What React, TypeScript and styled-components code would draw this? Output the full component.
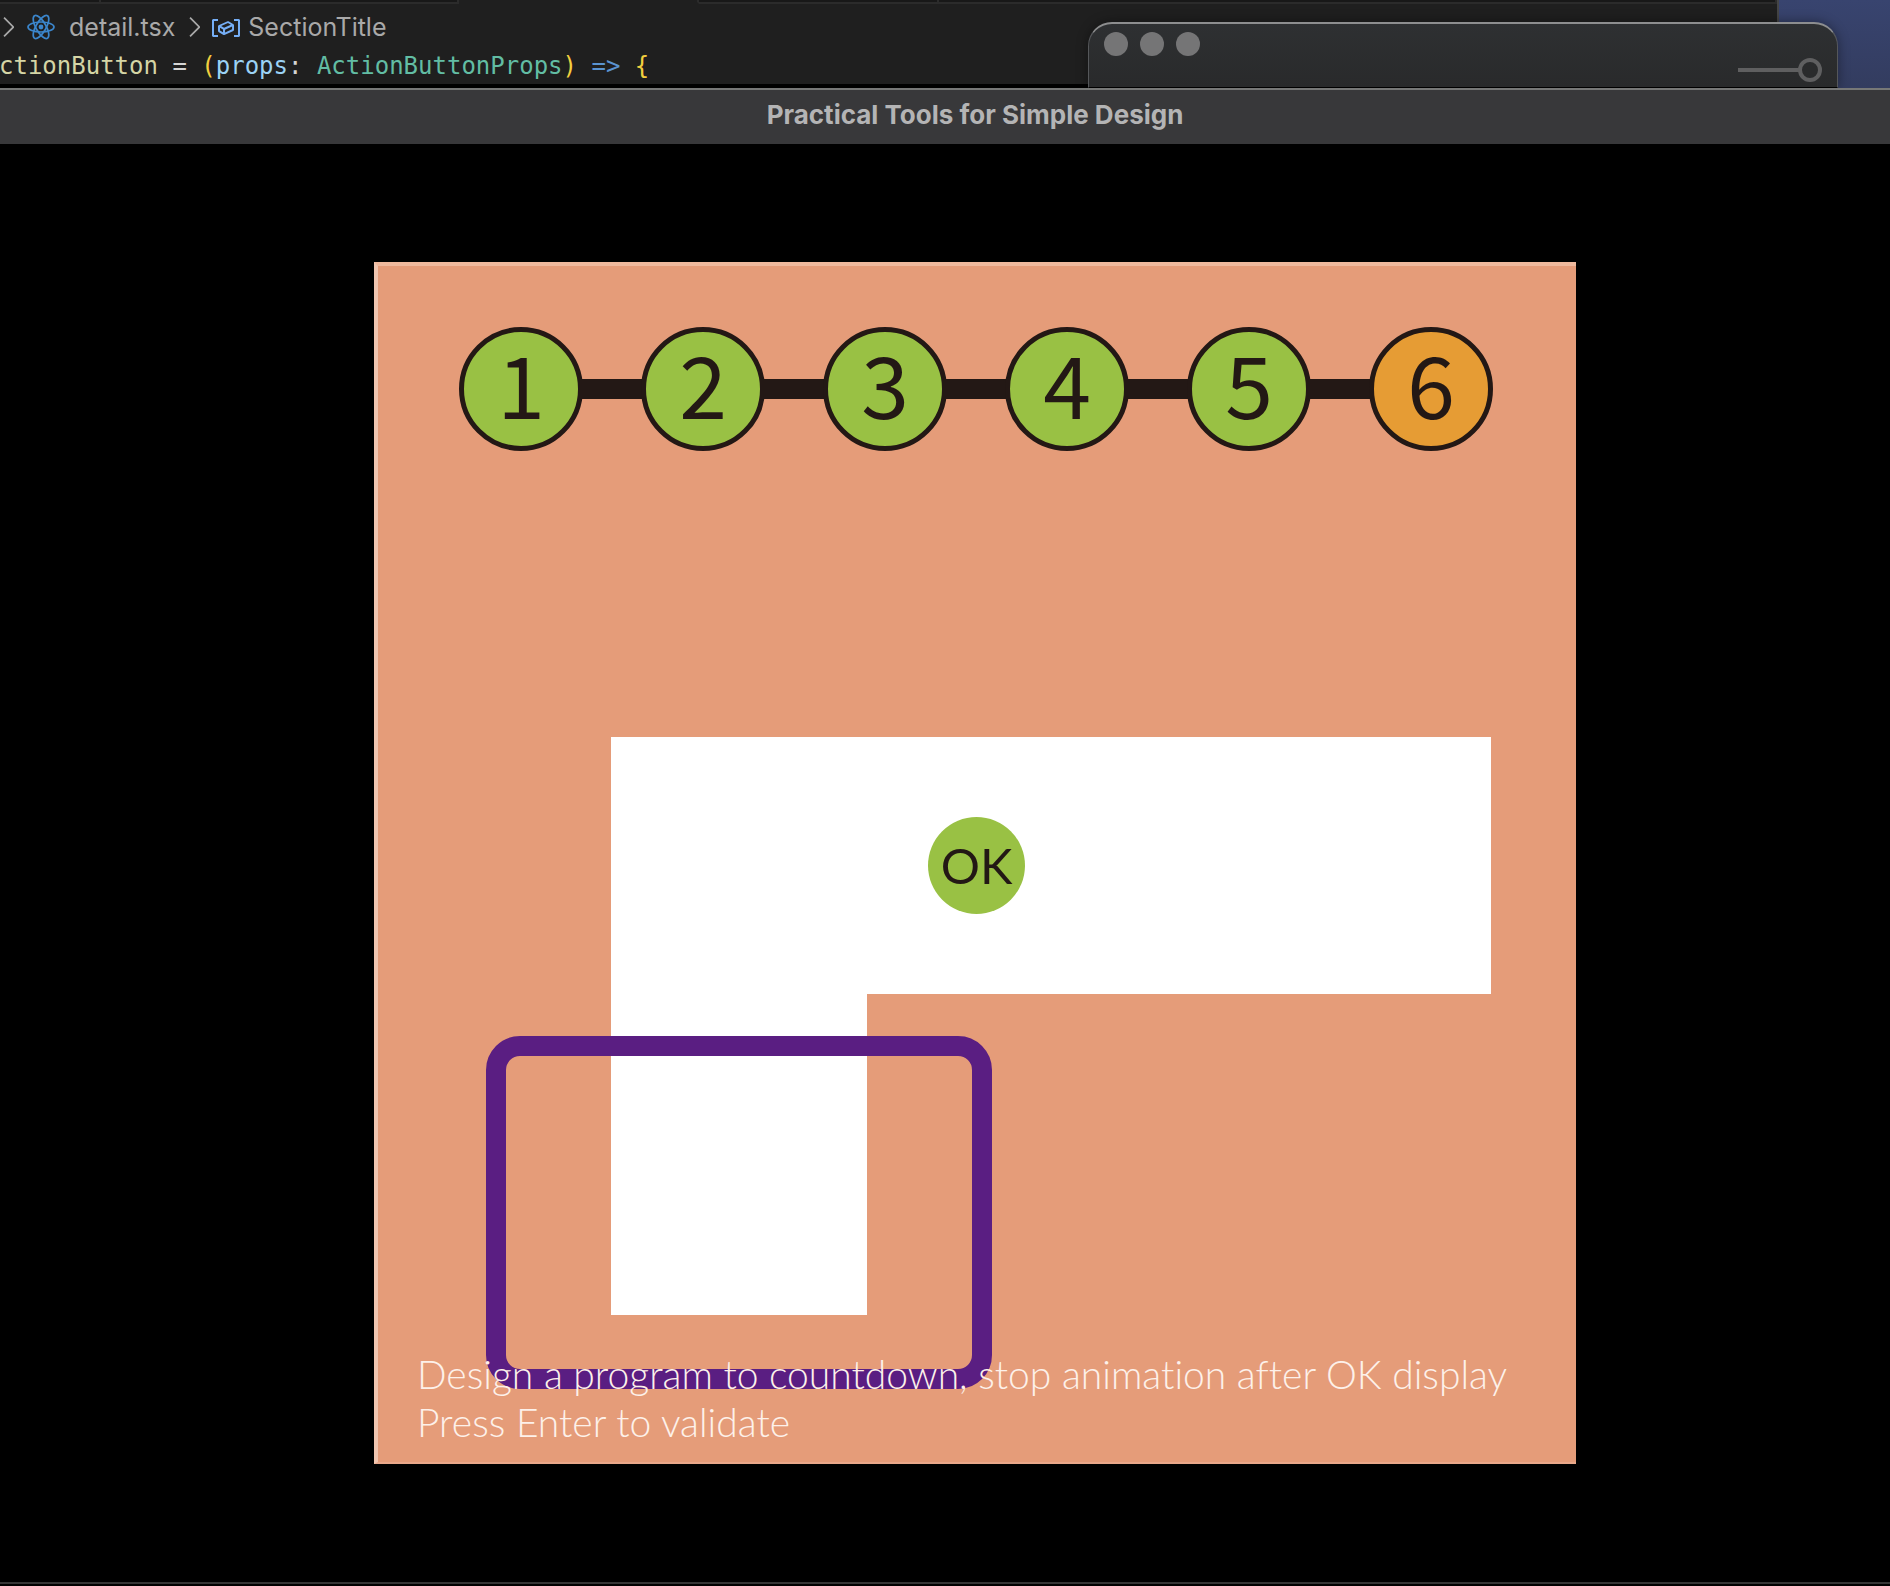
import React from "react";
import styled, { createGlobalStyle } from "styled-components";
import { VscChevronRight, VscSymbolVariable } from "react-icons/vsc";

const ink = "#231815";
const green = "#99c144";
const orange = "#e69c34";
const salmon = "#e59c79";
const purple = "#5a1e82";

const GlobalStyle = createGlobalStyle`
  *, *::before, *::after { box-sizing: border-box; }
  body {
    margin: 0;
    background: #000;
    font-family: Inter, "Liberation Sans", sans-serif;
  }
`;

const Desktop = styled.div`
  position: relative;
  display: flex;
  flex-direction: column;
  min-height: 100vh;
  padding-top: 88px;
  overflow: hidden;
  background: linear-gradient(#38446f, #333c5f 88px, #000 88px);
`;

const EditorWindow = styled.section`
  position: absolute;
  top: 0;
  left: 0;
  right: 111px;
  height: 88px;
  background: #1f1f1f;
  border-right: 2px solid #454545;
  border-bottom: 4px solid #000;
  overflow: hidden;
`;

const TabStrip = styled.div`
  display: flex;
  height: 4px;
`;

const TabEdge = styled.div<{ $width?: number; $active?: boolean }>`
  flex: ${(p) => (p.$width ? `0 0 ${p.$width}px` : "1")};
  background: ${(p) => (p.$active ? "#1f1f1f" : "#181818")};
  border-bottom: 2px solid ${(p) => (p.$active ? "#1f1f1f" : "#2b2b2b")};
  border-right: 2px solid #2b2b2b;
`;

const Breadcrumbs = styled.nav`
  display: flex;
  align-items: center;
  height: 46px;
  margin-left: -8px;
  color: #a9a9a9;
  font-size: 25px;
  line-height: 32px;
`;

const FileCrumb = styled.span`
  display: flex;
  align-items: center;
  gap: 14px;
  padding: 0 3px;
`;

const SymbolCrumb = styled.span`
  display: flex;
  align-items: center;
  gap: 6px;
`;

const CodeLine = styled.pre`
  margin: 0 0 0 -1px;
  font-family: "DejaVu Sans Mono", monospace;
  font-size: 24px;
  line-height: 32px;
  color: #d4d4d4;
`;

const Token = styled.span<{ $color: string }>`
  color: ${(p) => p.$color};
`;

const BackWindow = styled.section`
  position: absolute;
  top: 22px;
  right: 52px;
  width: 750px;
  height: 66px;
  padding: 8px 15px 0;
  background: linear-gradient(#2e3032, #292a2b);
  border: 1px solid #55575a;
  border-top: 2px solid #8d8e8f;
  border-bottom: 1px solid #000;
  border-radius: 24px 24px 0 0;
  box-shadow: 0 0 12px rgba(0, 0, 0, 0.4);
`;

const Lights = styled.div`
  display: flex;
  gap: 12px;
`;

const Light = styled.button`
  width: 24px;
  height: 24px;
  padding: 0;
  border: 0;
  border-radius: 50%;
  background: #757576;
`;

const ZoomSlider = styled.input`
  appearance: none;
  display: block;
  width: 84px;
  height: 24px;
  margin: 2px 0 0 auto;
  background: linear-gradient(#5f5f60, #5f5f60) left center / 62px 4px no-repeat;

  &::-webkit-slider-thumb {
    appearance: none;
    width: 24px;
    height: 24px;
    border: 4px solid #5f5f60;
    border-radius: 50%;
    background: #2a2b2c;
  }
`;

const AppWindow = styled.main`
  position: relative;
  flex: 1;
  display: flex;
  flex-direction: column;
  margin-bottom: 2px;
  background: #000;
  border-bottom: 2px solid #353535;
`;

const TitleBar = styled.header`
  display: flex;
  align-items: center;
  justify-content: center;
  height: 56px;
  padding: 0 0 4px 60px;
  background: #38383a;
  border-top: 2px solid #777877;
`;

const Title = styled.h1`
  margin: 0;
  color: #b4b4b5;
  font-size: 26px;
  line-height: 32px;
  font-weight: 700;
`;

const Stage = styled.div`
  display: flex;
  justify-content: center;
  padding: 118px 0 118px 60px;
`;

const Game = styled.section`
  width: 100%;
  max-width: 1202px;
  padding: 61px 83px 16px 39px;
  background: ${salmon};
  border-top: 4px solid #efb99d;
  border-left: 4px solid #f1c6b0;
  border-bottom: 2px solid #e9a88a;
`;

const Steps = styled.ol`
  display: flex;
  align-items: center;
  margin: 0 0 0 42px;
  padding: 0;
  list-style: none;
`;

const Step = styled.li<{ $current: boolean }>`
  flex: none;
  display: flex;
  align-items: center;
  justify-content: center;
  width: 124px;
  height: 124px;
  padding-bottom: 14px;
  border: 5px solid ${ink};
  border-radius: 50%;
  background: ${(p) => (p.$current ? orange : green)};
  color: ${ink};
  font-family: "Noto Sans CJK JP", sans-serif;
  font-size: 86px;
  line-height: 100px;
`;

const Link = styled.li`
  flex: 1;
  height: 20px;
  margin: 0 -3px;
  background: ${ink};
`;

const Board = styled.div`
  position: relative;
  margin: 286px 2px 35px 194px;
`;

const Arm = styled.div`
  display: flex;
  align-items: center;
  height: 257px;
  padding-left: 317px;
  background: #fff;
`;

const Leg = styled.div`
  width: 256px;
  height: 321px;
  background: #fff;
`;

const OkButton = styled.button`
  width: 97px;
  height: 97px;
  padding: 0 0 2px;
  border: 0;
  border-radius: 50%;
  background: ${green};
  color: ${ink};
  font-family: Lato, sans-serif;
  font-size: 49px;
  line-height: 60px;
`;

const Frame = styled.div`
  position: absolute;
  top: 299px;
  left: -125px;
  width: 506px;
  height: 353px;
  border: 20px solid ${purple};
  border-radius: 34px;
`;

const Hint = styled.p`
  position: relative;
  margin: 0;
  color: #fdf1ea;
  font-family: "Ink Free", Lato, cursive;
  font-size: 39px;
  font-weight: 300;
  font-variant-ligatures: none;
  line-height: 48px;
  white-space: nowrap;
`;

const ReactLogo = () => (
  <svg width="28" height="28" viewBox="-14 -14 28 28" fill="none" stroke="#3b86cc" strokeWidth="1.7" aria-hidden="true">
    <ellipse rx="13" ry="5" />
    <ellipse rx="13" ry="5" transform="rotate(60)" />
    <ellipse rx="13" ry="5" transform="rotate(120)" />
    <circle r="2.4" fill="#3b86cc" stroke="none" />
  </svg>
);

const steps = [1, 2, 3, 4, 5, 6];
const currentStep = 6;

export default function App() {
  return (
    <Desktop>
      <GlobalStyle />
      <EditorWindow>
        <TabStrip>
          <TabEdge $width={101} />
          <TabEdge $width={358} />
          <TabEdge $width={240} $active />
          <TabEdge $width={240} />
          <TabEdge />
        </TabStrip>
        <Breadcrumbs aria-label="Breadcrumb">
          <VscChevronRight size={32} />
          <FileCrumb>
            <ReactLogo />
            <span>detail.tsx</span>
          </FileCrumb>
          <VscChevronRight size={32} />
          <SymbolCrumb>
            <VscSymbolVariable size={32} color="#75aef5" />
            <span>SectionTitle</span>
          </SymbolCrumb>
        </Breadcrumbs>
        <CodeLine>
          <Token $color="#d5d5a5">ctionButton</Token>
          {" = "}
          <Token $color="#f2cf3e">(</Token>
          <Token $color="#9bd2f5">props</Token>
          {": "}
          <Token $color="#62bda4">ActionButtonProps</Token>
          <Token $color="#f2cf3e">)</Token>{" "}
          <Token $color="#5a93d0">=&gt;</Token>{" "}
          <Token $color="#f2cf3e">{"{"}</Token>
        </CodeLine>
      </EditorWindow>

      <BackWindow>
        <Lights>
          <Light aria-label="Close" />
          <Light aria-label="Minimize" />
          <Light aria-label="Zoom" />
        </Lights>
        <ZoomSlider type="range" min={0} max={100} defaultValue={100} aria-label="Size" />
      </BackWindow>

      <AppWindow>
        <TitleBar>
          <Title>Practical Tools for Simple Design</Title>
        </TitleBar>
        <Stage>
          <Game>
            <Steps>
              {steps.map((n) => (
                <React.Fragment key={n}>
                  {n > 1 && <Link role="presentation" />}
                  <Step $current={n === currentStep}>{n}</Step>
                </React.Fragment>
              ))}
            </Steps>
            <Board>
              <Arm>
                <OkButton>OK</OkButton>
              </Arm>
              <Leg />
              <Frame />
            </Board>
            <Hint>
              Design a program to countdown, stop animation after OK display
              <br />
              Press Enter to validate
            </Hint>
          </Game>
        </Stage>
      </AppWindow>
    </Desktop>
  );
}
